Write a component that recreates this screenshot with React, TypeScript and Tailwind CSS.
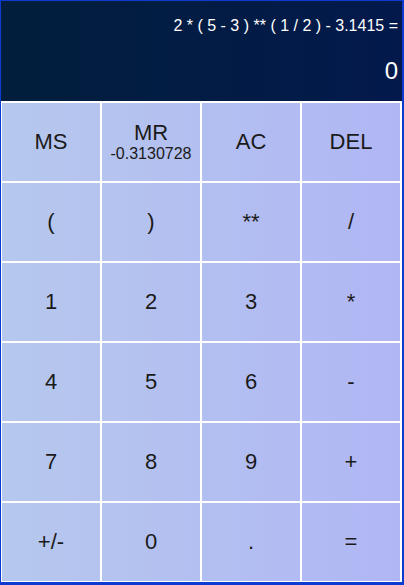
import React from "react";

const keys: { label: string; sub?: string }[] = [
  { label: "MS" },
  { label: "MR", sub: "-0.3130728" },
  { label: "AC" },
  { label: "DEL" },
  { label: "(" },
  { label: ")" },
  { label: "**" },
  { label: "/" },
  { label: "1" },
  { label: "2" },
  { label: "3" },
  { label: "*" },
  { label: "4" },
  { label: "5" },
  { label: "6" },
  { label: "-" },
  { label: "7" },
  { label: "8" },
  { label: "9" },
  { label: "+" },
  { label: "+/-" },
  { label: "0" },
  { label: "." },
  { label: "=" },
];

export default function App() {
  return (
    <div
      className="w-[404px] h-[585px] bg-[#0b3bd0] pl-[1px] pt-[1px] pr-[2px] pb-[3px]"
      style={{ fontFamily: '"Liberation Sans", Arial, sans-serif' }}
    >
      <div className="flex h-full flex-col bg-white">
        <div className="flex h-[100px] flex-col items-end bg-linear-to-r from-[#021e3c] to-[#03194c] pr-[4px] pt-[17px] text-white">
          <div className="text-[16px] leading-none">2 * ( 5 - 3 ) ** ( 1 / 2 ) - 3.1415 =</div>
          <div className="mt-[25px] text-[24px] leading-none">0</div>
        </div>
        <div className="grid grid-cols-[repeat(4,98px)] grid-rows-[repeat(6,78px)] gap-[2px] pl-[1px] pt-[2px]">
          {keys.map((k, i) => (
            <div
              key={i}
              className="flex flex-col items-center justify-center bg-linear-to-r from-[#b6c8ed] to-[#b0b6f4] bg-fixed text-[#1a1a1a]"
            >
              <div className="text-[22px] leading-none">{k.label}</div>
              {k.sub && <div className="mt-[2px] text-[16px] leading-none">{k.sub}</div>}
            </div>
          ))}
        </div>
      </div>
    </div>
  );
}
